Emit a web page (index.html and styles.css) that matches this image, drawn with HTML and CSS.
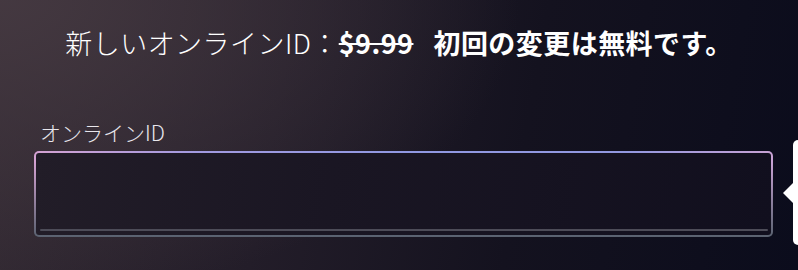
FILE: index.html
```html
<!DOCTYPE html>
<html lang="ja">
<head>
  <meta charset="UTF-8">
  <title>オンラインID</title>
  <link rel="stylesheet" href="styles.css">
</head>
<body>
  <div class="screen">
    <h1 class="price-line">
      <span class="lead">新しいオンラインID：</span><s class="old-price">$9.99</s><span class="free">初回の変更は無料です。</span>
    </h1>

    <div class="field">
      <label class="field-label" for="onlineId">オンラインID</label>
      <div class="input-box">
        <input type="text" id="onlineId" class="id-input">
        <div class="input-line"></div>
      </div>
    </div>

    <div class="hint-tip"></div>
  </div>
</body>
</html>
```

FILE: styles.css
```css
body {
  margin: 0;
  padding: 0;
  background: #0c0c1c;
  font-family: "Noto Sans CJK JP", "Noto Sans", sans-serif;
  color: #fff;
}
.screen {
  position: relative;
  width: 798px;
  height: 270px;
  overflow: hidden;
  background:
    radial-gradient(ellipse 520px 300px at 0% 0%, rgba(70,58,66,0.9), rgba(70,58,66,0) 100%),
    linear-gradient(100deg, #332a33 0%, #231d29 35%, #14121f 65%, #0b0c1c 100%);
}
.price-line {
  margin: 0;
  padding-top: 26px;
  text-align: center;
  font-size: 27px;
  line-height: 34px;
  font-weight: 700;
  letter-spacing: 0.45px;
  white-space: nowrap;
}
.lead {
  font-weight: 300;
}
.old-price {
  font-weight: 700;
  margin-right: 20px;
  text-decoration-thickness: 2px;
}
.field {
  padding: 0 25px 0 34px;
  margin-top: 59px;
}
.field-label {
  display: block;
  padding-left: 6px;
  font-size: 21px;
  line-height: 26px;
  font-weight: 300;
  color: #e8e6ec;
  margin-bottom: 6px;
}
.input-box {
  display: flex;
  flex-direction: column;
  height: 78px;
  padding: 0 3px 4px 4px;
  border: 2px solid transparent;
  border-radius: 5px;
  background:
    linear-gradient(100deg, #221d28 0%, #1a1623 40%, #110f1e 100%) padding-box,
    linear-gradient(to bottom, rgba(90,100,112,0) 0%, rgba(90,100,112,0) 12%, #5a6270 100%) border-box,
    linear-gradient(to right, #d4a2d2 0%, #a29ae0 22%, #9098e2 50%, #9298e0 80%, #c8a2d4 100%) border-box;
}
.id-input {
  flex: 1;
  background: transparent;
  border: none;
  outline: none;
  color: #fff;
  font: inherit;
  font-size: 20px;
}
.input-line {
  height: 2px;
  background: #4d4c58;
  border-radius: 1px;
}
.hint-tip {
  position: absolute;
  left: 793px;
  top: 140px;
  width: 20px;
  height: 105px;
  background: #fff;
  border-radius: 5px;
}
.hint-tip::before {
  content: "";
  position: absolute;
  left: -10px;
  top: 43px;
  border-top: 10px solid transparent;
  border-bottom: 10px solid transparent;
  border-right: 10px solid #fff;
}
```
